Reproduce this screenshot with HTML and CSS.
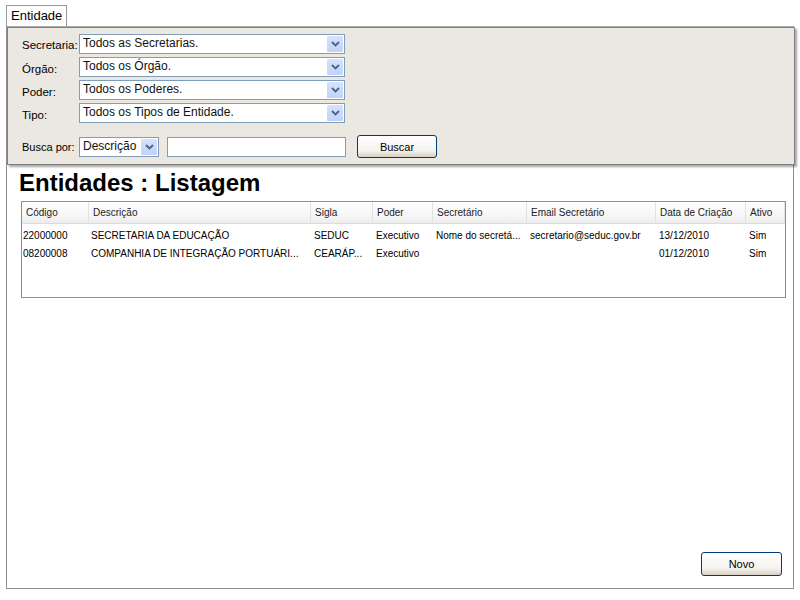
FILE: index.html
```html
<!DOCTYPE html>
<html>
<head>
<meta charset="utf-8">
<link rel="stylesheet" href="styles.css">
</head>
<body>
<div class="tab">Entidade</div>
<div class="panel">
  <div class="filters">
    <div class="frow">
      <span class="flabel">Secretaria:</span>
      <div class="combo wide"><span class="ctext">Todos as Secretarias.</span><span class="cbtn"><svg width="9" height="6" viewBox="0 0 9 6"><path d="M1 1 L4.5 4.5 L8 1" fill="none" stroke="#4d6185" stroke-width="1.8"/></svg></span></div>
    </div>
    <div class="frow">
      <span class="flabel">Órgão:</span>
      <div class="combo wide"><span class="ctext">Todos os Órgão.</span><span class="cbtn"><svg width="9" height="6" viewBox="0 0 9 6"><path d="M1 1 L4.5 4.5 L8 1" fill="none" stroke="#4d6185" stroke-width="1.8"/></svg></span></div>
    </div>
    <div class="frow">
      <span class="flabel">Poder:</span>
      <div class="combo wide"><span class="ctext">Todos os Poderes.</span><span class="cbtn"><svg width="9" height="6" viewBox="0 0 9 6"><path d="M1 1 L4.5 4.5 L8 1" fill="none" stroke="#4d6185" stroke-width="1.8"/></svg></span></div>
    </div>
    <div class="frow">
      <span class="flabel">Tipo:</span>
      <div class="combo wide"><span class="ctext">Todos os Tipos de Entidade.</span><span class="cbtn"><svg width="9" height="6" viewBox="0 0 9 6"><path d="M1 1 L4.5 4.5 L8 1" fill="none" stroke="#4d6185" stroke-width="1.8"/></svg></span></div>
    </div>
    <div class="srow">
      <span class="slabel">Busca por:</span>
      <div class="combo small"><span class="ctext">Descrição</span><span class="cbtn"><svg width="9" height="6" viewBox="0 0 9 6"><path d="M1 1 L4.5 4.5 L8 1" fill="none" stroke="#4d6185" stroke-width="1.8"/></svg></span></div>
      <div class="sinput"></div>
      <button class="xpbtn buscar">Buscar</button>
    </div>
  </div>
  <h1 class="title">Entidades : Listagem</h1>
  <div class="grid">
    <div class="ghead">
      <span class="c1">Código</span><span class="c2">Descrição</span><span class="c3">Sigla</span><span class="c4">Poder</span><span class="c5">Secretário</span><span class="c6">Email Secretário</span><span class="c7">Data de Criação</span><span class="c8">Ativo</span>
    </div>
    <div class="grow">
      <span class="c1">22000000</span><span class="c2">SECRETARIA DA EDUCAÇÃO</span><span class="c3">SEDUC</span><span class="c4">Executivo</span><span class="c5">Nome do secretá...</span><span class="c6">secretario@seduc.gov.br</span><span class="c7">13/12/2010</span><span class="c8">Sim</span>
    </div>
    <div class="grow">
      <span class="c1">08200008</span><span class="c2">COMPANHIA DE INTEGRAÇÃO PORTUÁRI...</span><span class="c3">CEARÁP...</span><span class="c4">Executivo</span><span class="c5"></span><span class="c6"></span><span class="c7">01/12/2010</span><span class="c8">Sim</span>
    </div>
  </div>
  <div class="footer">
    <button class="xpbtn novo">Novo</button>
  </div>
</div>
</body>
</html>
```

FILE: styles.css
```css
html, body {
  margin: 0;
  padding: 0;
  background: #ffffff;
  font-family: "Liberation Sans", Arial, sans-serif;
  color: #000;
}

.tab {
  display: inline-block;
  margin: 5px 0 0 6px;
  height: 20px;
  line-height: 20px;
  padding: 0 4px 0 4px;
  font-size: 13px;
  border: 1px solid #919b9c;
  border-bottom: none;
  background: #fff;
  vertical-align: top;
}

.panel {
  margin: 0 6px 0 6px;
  border: 1px solid #8f8f8f;
  border-top-color: #a8a8a8;
  display: flex;
  flex-direction: column;
  box-sizing: border-box;
  height: 563px;
}

.filters {
  background: #ebe8e2;
  border: 1px solid #808080;
  box-shadow: 2px 2px 2px rgba(0, 0, 0, 0.35);
  height: 138px;
  box-sizing: border-box;
  padding: 6px 0 0 14px;
  margin-right: -2px;
}

.frow {
  display: flex;
  align-items: center;
  height: 20px;
  margin-bottom: 3px;
}

.flabel {
  width: 57px;
  flex-shrink: 0;
  font-size: 11.5px;
  padding-top: 4px;
  white-space: nowrap;
}

.frow:first-child .flabel { padding-top: 2px; }

.combo {
  height: 20px;
  box-sizing: border-box;
  border: 1px solid #7f9db9;
  background: #fff;
  display: flex;
  align-items: stretch;
  font-size: 12px;
}

.combo.wide { width: 266px; }
.combo.small { width: 80px; }

.ctext {
  flex: 1;
  padding-left: 3px;
  line-height: 17px;
  white-space: nowrap;
  overflow: hidden;
  color: #111;
}

.cbtn {
  width: 16px;
  margin: 1px;
  background: linear-gradient(#d6e3fd, #c0d2f8);
  border-radius: 1px;
  display: flex;
  align-items: center;
  justify-content: center;
}

.srow {
  display: flex;
  align-items: center;
  margin-top: 12px;
}

.slabel {
  width: 57px;
  font-size: 11px;
}

.sinput {
  width: 179px;
  height: 20px;
  box-sizing: border-box;
  border: 1px solid #7f9db9;
  background: #fff;
  margin-left: 8px;
}

.xpbtn {
  font-family: "Liberation Sans", Arial, sans-serif;
  font-size: 11px;
  color: #000;
  border: 1px solid #003c74;
  border-radius: 3px;
  background: linear-gradient(#ffffff, #f4f3ee 70%, #d6d0c5);
  padding: 0;
  box-sizing: border-box;
}

.buscar {
  width: 80px;
  height: 23px;
  margin-left: 11px;
}

.title {
  margin: 5px 0 0 12px;
  font-size: 24px;
  font-weight: bold;
  line-height: 26px;
  height: 26px;
}

.grid {
  margin: 5px 0 0 14px;
  width: 765px;
  height: 97px;
  box-sizing: border-box;
  border: 1px solid #8f8f8f;
  font-size: 10px;
}

.ghead {
  display: flex;
  height: 22px;
  background: linear-gradient(#ffffff, #f7f7f7 60%, #ececec);
  border-bottom: 1px solid #dcdcdc;
  box-sizing: border-box;
}

.ghead span {
  line-height: 21px;
  padding-left: 4px;
  border-right: 1px solid #e2e2e2;
  box-sizing: border-box;
  color: #222;
}

.grow {
  display: flex;
  height: 18px;
}

.ghead + .grow { margin-top: 3px; }

.grow span {
  line-height: 18px;
  padding-left: 3px;
  box-sizing: border-box;
  white-space: nowrap;
  overflow: hidden;
}

.c1 { width: 67px; }
.c2 { width: 222px; }
.c3 { width: 62px; }
.c4 { width: 60px; }
.c5 { width: 94px; }
.c6 { width: 129px; }
.c7 { width: 90px; }
.c8 { width: 39px; }

.grow .c1 { padding-left: 1px; }
.grow .c2 { padding-left: 2px; }

.footer {
  margin-top: auto;
  display: flex;
  justify-content: flex-end;
  padding: 0 11px 12px 0;
}

.novo {
  width: 81px;
  height: 24px;
}
```
